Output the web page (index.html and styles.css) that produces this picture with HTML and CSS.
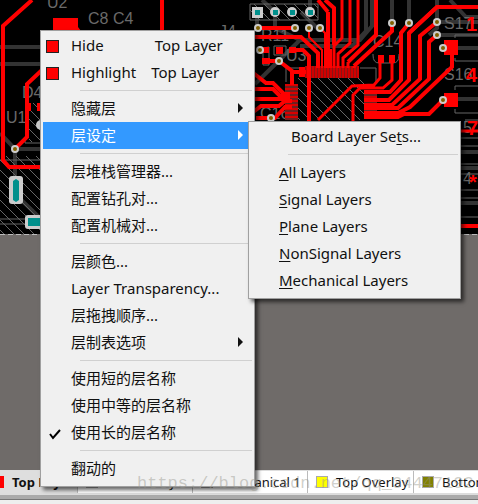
FILE: index.html
```html
<!DOCTYPE html>
<html lang="zh-CN">
  <head>
    <meta charset="UTF-8" />
    <meta name="viewport" content="width=device-width, initial-scale=1.0" />
    <title>PCB</title>
    <link rel="stylesheet" href="styles.css">
  </head>
  <body>
    <div class="app">
      <main class="workspace">
        <svg class="board" viewBox="0 0 478 236" preserveAspectRatio="xMinYMin slice" aria-hidden="true">
          <defs>
            <pattern id="hatch" width="10" height="10" patternUnits="userSpaceOnUse">
              <path d="M-1 -1L11 11" stroke="#666" stroke-width="1" />
            </pattern>
            <pattern id="pins" width="3" height="12" patternUnits="userSpaceOnUse">
              <rect width="3" height="12" fill="#8a1414" />
              <rect width="2" height="12" fill="#d00000" />
            </pattern>
            <pattern id="pinsv" width="13" height="4" patternUnits="userSpaceOnUse">
              <rect width="13" height="4" fill="#6d2020" />
              <rect width="13" height="2" fill="#d80000" />
            </pattern>
            <g id="via">
              <circle r="4" fill="#ccc" />
              <circle r="2" fill="#806000" />
            </g>
          </defs>
          <rect width="478" height="234" fill="#000" />
          <!-- bottom layer -->
          <g fill="none" stroke="#333" stroke-width="4">
            <path d="M0 47H42M0 64H42M15 149V180M0 133L15 149H42M15 194L40 218" />
            <path d="M257 15V28M275 14V28L300 40H360L372 26V0M262 0L275 12M310 12V0M301 12L318 29M255 84L300 40M392 0V23M409 0V23M437 0V28L429 35M300 46H352L366 31V0" />
            <path d="M450 0L466 17H478M437 22H478M437 35H478M452 48H478M452 99H478M461 152H478M461 168H478M461 203H478" />
          </g>
          <!-- overlay outlines -->
          <path d="M0 156H40V234H0z" fill="url(#hatch)" />
          <path d="M29 103H40V142H29z" fill="url(#hatch)" />
          <path d="M250 4H318V20H250z" fill="url(#hatch)" stroke="#666" />
          <path d="M298 78H364V120H298z" fill="url(#hatch)" />
          <g fill="none" stroke="#666" stroke-width="1">
            <path d="M286 82V68H304M360 68H376V82M263 48V65H269V47zM274 46V55H286V46zM373 55q0 8 6 8h14q6 0 6-8M373 55v-1M399 55v-1M25 137V143H40M0 160H40M0 219H27M0 224H27" />
            <path d="M455 38V35H478M455 58V61H478M455 90V86H478M455 109V113H478M465 120H478M461 138H478M461 146H478M461 164H478M461 174H478M461 190H478M461 198H478M461 217H478" />
          </g>
          <g class="silk">
            <text x="47" y="8">U2</text>
            <text x="88" y="24">C8 C4</text>
            <text x="22" y="98">D4</text>
            <text x="6" y="123">U1</text>
            <text x="219" y="37">J4</text>
            <text x="261" y="41">R11</text>
            <text x="286" y="61">U3</text>
            <text x="260" y="119">C16</text>
            <text x="373" y="47">C14</text>
            <text x="444" y="29">S17</text>
            <text x="444" y="80">S16</text>
            <text x="463" y="133">5</text>
            <text x="463" y="184">4</text>
          </g>
          <!-- top layer -->
          <path d="M305 66H359V78H305z" fill="url(#pins)" />
          <path d="M285 84H298V120H285z" fill="url(#pinsv)" />
          <path d="M364 93H377V118H364z" fill="url(#pinsv)" />
          <g class="track">
            <path d="M32 0L3 26V160L9 167H42M162 0V32M42 70L27 84V137L15 149" />
            <path d="M258 28H294M252 37H301L318 53V68M328 12V68M318 0L328 12M325 0L334 8V45" />
            <path d="M376 0V35L348 62M392 23V31L354 66M437 7L409 33" />
            <path d="M291 50H303L309 56V122M268 61H279L292 71V85M292 72H306" />
            <path d="M252 72L266 83H273L284 94H290M252 89H273L280 96H290M252 99H290M252 113L261 106H279L285 101H292M256 118H275L285 107H292" />
            <path d="M409 23L401 33V80L390 92H364M478 7H437L409 33V80L389 100H364M437 22L420 36V79L392 105H364M437 35L429 42V79L398 108H364" />
            <path d="M452 54V67L410 107L398 113H364M443 100L429 114H404L398 117H364" />
            <path d="M461 226H478" />
          </g>
          <g class="track thin">
            <path d="M342 0V38L334 46V68M350 0V43L338 54V68M358 0V45L343 58V68M348 62V68M354 66V68" />
            <path d="M380 60V78L374 85L352 86L318 120M392 60V80L383 88H360L353 95V122M461 131H478" />
          </g>
          <g class="track fine">
            <path d="M309 28V37L322 50V68M320 28L325 33V68M331 49V68" />
          </g>
          <g fill="#f00">
            <path d="M53 18H78V27L81 31H53zM444 40h14v15h-14zM444 93h14v14h-14zM378 55h6v8h-6zM389 55h6v8h-6zM257 47h12v6h-12zM276 47h7v7h-7zM289 47h7v6h-7zM262 58h8v6h-8zM25 103h6v8h-6zM37 103h4v8h-4zM299 67h6v10h-6z" />
          </g>
          <g class="mark">
            <text x="466" y="31">1</text>
            <text x="466" y="82">4</text>
            <text x="467" y="135">7</text>
            <text x="469" y="189">*</text>
          </g>
          <g fill="#ccc">
            <path d="M252 7h11v11h-11z" />
            <circle cx="275" cy="12" r="5" />
            <circle cx="292" cy="12" r="5" />
            <circle cx="310" cy="12" r="5" />
            <rect x="9" y="176" width="14" height="28" rx="3" />
            <rect x="25" y="215" width="20" height="14" rx="3" />
            <circle cx="41" cy="125" r="5" />
          </g>
          <path fill="#00908c" d="M255 10h5v5h-5zM273 10h5v5h-5zM290 10h5v5h-5zM308 10h5v5h-5zM13 181l3-2 3 2v19l-3 2-3-2zM28 218h14v8H28z" />
          <use href="#via" x="15" y="149" />
          <use href="#via" x="258" y="28" />
          <use href="#via" x="295" y="28" />
          <use href="#via" x="309" y="28" />
          <use href="#via" x="320" y="28" />
          <use href="#via" x="260" y="50" />
          <use href="#via" x="279" y="61" />
          <use href="#via" x="271" y="118" />
          <use href="#via" x="392" y="23" />
          <use href="#via" x="409" y="23" />
          <use href="#via" x="437" y="22" />
          <use href="#via" x="437" y="35" />
          <use href="#via" x="443" y="48" />
          <use href="#via" x="443" y="100" />
          <path d="M0 234.500H478" stroke="#bbb" stroke-dasharray="5 3" />
        </svg>
      </main>

      <nav class="tabs">
        <button class="tab active"><span class="chip red"></span>Top Layer</button>
        <button class="tab"><span class="chip blue"></span>Bottom Layer</button>
        <button class="tab"><span class="chip pink"></span>Mechanical 1</button>
        <button class="tab"><span class="chip yellow"></span>Top Overlay</button>
        <button class="tab"><span class="chip olive"></span>Bottom Overlay</button>
      </nav>
      <div class="edge"></div>

      <div class="menu main-menu" role="menu">
        <button class="item" role="menuitem"><span class="swatch"></span><span class="word hide">Hide</span>Top Layer</button>
        <button class="item" role="menuitem"><span class="swatch"></span><span class="word">Highlight</span>Top Layer</button>
        <hr>
        <button class="item" role="menuitem">隐藏层<span class="arrow"></span></button>
        <button class="item selected" role="menuitem">层设定<span class="arrow"></span></button>
        <hr>
        <button class="item" role="menuitem">层堆栈管理器...</button>
        <button class="item" role="menuitem">配置钻孔对...</button>
        <button class="item" role="menuitem">配置机械对...</button>
        <hr>
        <button class="item" role="menuitem">层颜色...</button>
        <button class="item" role="menuitem">Layer Transparency...</button>
        <button class="item" role="menuitem">层拖拽顺序...</button>
        <button class="item" role="menuitem">层制表选项<span class="arrow"></span></button>
        <hr>
        <button class="item" role="menuitem">使用短的层名称</button>
        <button class="item" role="menuitem">使用中等的层名称</button>
        <button class="item" role="menuitem">
          <svg class="check" viewBox="0 0 12 12" aria-hidden="true"><path d="M1 6L4 10L11 2" /></svg>使用长的层名称
        </button>
        <hr>
        <button class="item" role="menuitem">翻动的</button>
      </div>

      <div class="menu sub-menu" role="menu">
        <button class="item sets" role="menuitem">Board Layer Se<u>t</u>s...</button>
        <hr>
        <button class="item" role="menuitem"><u>A</u>ll Layers</button>
        <button class="item" role="menuitem"><u>S</u>ignal Layers</button>
        <button class="item" role="menuitem"><u>P</u>lane Layers</button>
        <button class="item" role="menuitem"><u>N</u>onSignal Layers</button>
        <button class="item" role="menuitem"><u>M</u>echanical Layers</button>
      </div>

      <span class="watermark">https://blog.csdn.net/qq_34447192</span>
    </div>
  </body>
</html>
```

FILE: styles.css
```css
* {
  box-sizing: border-box;
}
html,
body {
  height: 100%;
  margin: 0;
}
button {
  margin: 0;
  border: 0;
  background: none;
  color: inherit;
  font: inherit;
  text-align: left;
  white-space: nowrap;
}
.app {
  position: relative;
  min-height: 100%;
  display: flex;
  flex-direction: column;
  overflow: hidden;
  background-color: #efefef;
  font-family: "Noto Sans", "Noto Sans CJK SC", sans-serif;
  color: #111;
}
.workspace {
  flex: 1;
  background-color: #6f6b69;
}
.board {
  display: block;
  width: 100%;
}
.silk {
  fill: #6a6a6a;
  font: 16px "Liberation Sans", sans-serif;
}
.mark {
  fill: #f00;
  font: bold 20px "Liberation Sans", sans-serif;
}
.track {
  fill: none;
  stroke: #f00;
  stroke-width: 4;
}
.track.thin {
  stroke-width: 3;
}
.track.fine {
  stroke-width: 2;
}

/* layer tabs */
.tabs {
  display: flex;
  height: 23px;
  overflow: hidden;
  background-color: #fff;
  border-top: 1px solid #ddd;
  font-size: 13px;
}
.tab {
  display: flex;
  flex: none;
  align-items: center;
  gap: 8px;
  width: 115px;
  padding: 0 0 0 8px;
  border-right: 1px solid #bbb;
}
.tab.active {
  width: 78px;
  padding: 0;
  background-color: #dedede;
  font-weight: 700;
}
.tab:nth-child(4) {
  width: 106px;
}
.chip {
  flex: none;
  width: 12px;
  height: 12px;
  border: 1px solid #aaa;
}
.chip.red {
  width: 4px;
  border: 0;
  background-color: #f00;
}
.chip.blue {
  background-color: #00f;
}
.chip.pink {
  background-color: #f0f;
}
.chip.yellow {
  background-color: #ff0;
}
.chip.olive {
  background-color: #808000;
}
.edge {
  height: 11px;
  background: linear-gradient(#ddd 0 2px, #aaa 2px 6px, #777 6px 7px, #eee 7px);
}

/* menus */
.menu {
  position: absolute;
  display: flex;
  flex-direction: column;
  padding: 1px 2px 4px;
  border: 1px solid #a0a0a0;
  background-color: #f0f0f0;
  box-shadow: 3px 3px 4px rgb(0 0 0 / 60%);
  font-size: 15px;
}
.main-menu {
  left: 40px;
  top: 30px;
  width: 215px;
}
.sub-menu {
  left: 248px;
  top: 121px;
  width: 213px;
}
.item {
  position: relative;
  display: block;
  height: 27px;
  padding: 0 0 0 28px;
  line-height: 27px;
}
.sub-menu .sets {
  padding-left: 40px;
}
.item.selected {
  background-color: #3399ff;
  color: #fff;
}
.menu hr {
  width: auto;
  height: 1px;
  margin: 4px 0 4px 37px;
  border: 0;
  background-color: #d0d0d0;
}
.word {
  display: inline-block;
  margin-right: 15px;
}
.word.hide {
  margin-right: 51px;
}
.swatch {
  position: absolute;
  left: 3px;
  top: 8px;
  width: 13px;
  height: 13px;
  border: 1px solid #222;
  background-color: #f00;
}
.arrow {
  position: absolute;
  right: 9px;
  top: 8px;
  border: 5px solid transparent;
  border-left-color: currentColor;
  border-right: 0;
}
.check {
  position: absolute;
  left: 6px;
  top: 9px;
  width: 12px;
  height: 12px;
  fill: none;
  stroke: #000;
  stroke-width: 2;
}
u {
  text-underline-offset: 2px;
}
.watermark {
  position: absolute;
  left: 137px;
  bottom: 10px;
  color: rgb(150 150 140 / 45%);
  font: 17px/20px "Liberation Mono", monospace;
}
```
